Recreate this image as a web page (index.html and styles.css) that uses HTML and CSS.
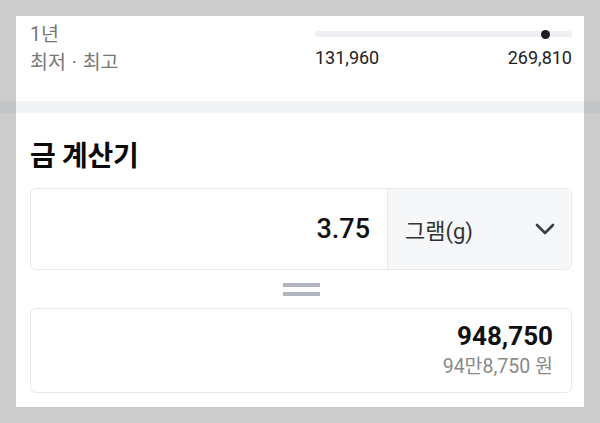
FILE: index.html
```html
<!DOCTYPE html>
<html lang="ko">
<head>
<meta charset="utf-8">
<link rel="stylesheet" href="styles.css">
</head>
<body>
  <section class="range">
    <div class="range-labels">
      <div class="period">1년</div>
      <div class="minmax">최저 · 최고</div>
    </div>
    <div class="range-bar">
      <div class="track"><span class="dot" style="left: 89.5%"></span></div>
      <div class="values"><span>131,960</span><span>269,810</span></div>
    </div>
  </section>
  <div class="band"></div>
  <section class="calc">
    <h2 class="calc-title">금 계산기</h2>
    <div class="input-box">
      <div class="amount">3.75</div>
      <div class="unit">
        <span>그램(g)</span>
        <svg class="chevron" width="20" height="12" viewBox="0 0 20 12"><polyline points="2,2 10,10 18,2" fill="none" stroke="#3a3e46" stroke-width="2.6" stroke-linecap="round" stroke-linejoin="round"/></svg>
      </div>
    </div>
    <div class="equals"><span></span><span></span></div>
    <div class="result-box">
      <div class="result">948,750</div>
      <div class="result-sub">94만8,750 원</div>
    </div>
  </section>
</body>
</html>
```
FILE: styles.css
```css
* { box-sizing: border-box; }
html, body { margin: 0; }
body {
  background: #cccccc;
  padding: 16px 0;
  font-family: Roboto, "Noto Sans CJK KR", sans-serif;
  color: #111;
}
.range {
  margin: 0 16px;
  background: #fff;
  height: 85px;
  padding: 0 12px 0 14px;
  display: grid;
  grid-template-columns: 1fr 257px;
}
.range-labels {
  padding-top: 5px;
  font-size: 19.5px;
  line-height: 28px;
  color: #777;
}
.minmax { word-spacing: 1px; }
.range-bar { padding-top: 15px; }
.track {
  position: relative;
  height: 6px;
  border-radius: 3px;
  background: #eeeff3;
}
.dot {
  position: absolute;
  top: -1.5px;
  width: 9px;
  height: 9px;
  margin-left: -4.5px;
  border-radius: 50%;
  background: #1c1c22;
}
.values {
  margin-top: 10px;
  display: flex;
  justify-content: space-between;
  font-size: 18px;
  line-height: 21px;
  color: #222;
}
.band {
  height: 12px;
  background: #f2f3f5;
  border-left: 16px solid #c3c4c6;
  border-right: 16px solid #c3c4c6;
}
.calc {
  margin: 0 16px;
  background: #fff;
  height: 294px;
  padding: 27px 12px 0 14px;
}
.calc-title {
  margin: 0 0 14px;
  font-size: 28px;
  line-height: 34px;
  font-weight: 700;
  letter-spacing: -0.3px;
  color: #0a0a0a;
}
.input-box {
  height: 82px;
  border: 1px solid #e8e9ec;
  border-radius: 6px;
  display: flex;
  overflow: hidden;
}
.amount {
  flex: 1;
  display: flex;
  align-items: center;
  justify-content: flex-end;
  padding-right: 17px;
  font-size: 27px;
  font-weight: 500;
  color: #111;
}
.unit {
  width: 184px;
  background: #f6f7f9;
  border-left: 1px solid #e8e9ec;
  display: flex;
  align-items: center;
  justify-content: space-between;
  padding: 0 16px 0 17px;
  font-size: 22px;
  color: #333;
}
.equals {
  display: flex;
  flex-direction: column;
  align-items: center;
  gap: 5px;
  margin: 13px 0 12px;
}
.equals span {
  width: 37px;
  height: 4px;
  background: #b1b5bf;
}
.result-box {
  height: 85px;
  border: 1px solid #e8e9ec;
  border-radius: 6px;
  padding: 12px 18px 0;
  text-align: right;
}
.result {
  font-size: 26px;
  line-height: 30px;
  font-weight: 700;
  color: #111;
}
.result-sub {
  margin-top: 4px;
  font-size: 19.5px;
  line-height: 24px;
  color: #8a8a8a;
}
```
